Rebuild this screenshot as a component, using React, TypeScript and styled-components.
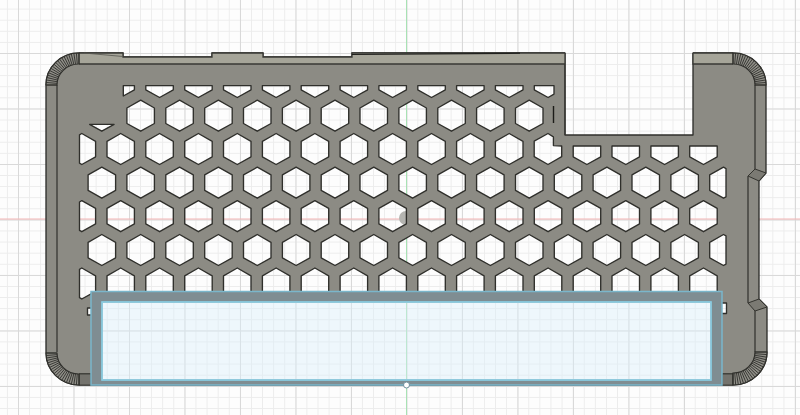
import { createGlobalStyle } from 'styled-components'
import styled from 'styled-components'

const GlobalStyle = createGlobalStyle`
  html, body {
    margin: 0;
    padding: 0;
    background: #fdfdfd;
    overflow: hidden;
  }
`

const Viewport = styled.main`
  width: 800px;
  height: 415px;
  background-color: #fdfdfd;
  background-image:
    linear-gradient(to right, #d9d9d9 1px, transparent 1px),
    linear-gradient(to bottom, #d9d9d9 1px, transparent 1px),
    linear-gradient(to right, #ececec 1px, transparent 1px),
    linear-gradient(to bottom, #ececec 1px, transparent 1px);
  background-size: 55.5px 55.5px, 55.5px 55.5px, 11.1px 11.1px, 11.1px 11.1px;
  background-position: 18px 53px, 18px 53px, 18px 53px, 18px 53px;
`

const Drawing = styled.svg`
  display: block;
  width: 800px;
  height: 415px;
`

type Pt = [number, number]
type Bounds = { minX?: number; maxX?: number; minY?: number; maxY?: number }

const HEX_W = 13.75
const HEX_H = 15.5
const PITCH = 38.85
const EVEN_X = 120.7
const ODD_X = 101.85

const hexagon = (cx: number, cy: number): Pt[] => [
  [cx, cy - HEX_H],
  [cx + HEX_W, cy - HEX_H / 2],
  [cx + HEX_W, cy + HEX_H / 2],
  [cx, cy + HEX_H],
  [cx - HEX_W, cy + HEX_H / 2],
  [cx - HEX_W, cy - HEX_H / 2],
]

// trim a polygon against one axis limit
const clipAxis = (pts: Pt[], axis: 0 | 1, limit: number, keepBelow: boolean): Pt[] => {
  const inside = (p: Pt) => (keepBelow ? p[axis] <= limit : p[axis] >= limit)
  const out: Pt[] = []
  pts.forEach((p, i) => {
    const q = pts[(i + 1) % pts.length]
    if (inside(p)) out.push(p)
    if (inside(p) !== inside(q)) {
      const t = (limit - p[axis]) / (q[axis] - p[axis])
      out.push([p[0] + (q[0] - p[0]) * t, p[1] + (q[1] - p[1]) * t])
    }
  })
  return out
}

const clip = (pts: Pt[], b: Bounds): Pt[] => {
  let r = pts
  if (b.minX !== undefined) r = clipAxis(r, 0, b.minX, false)
  if (b.maxX !== undefined) r = clipAxis(r, 0, b.maxX, true)
  if (b.minY !== undefined) r = clipAxis(r, 1, b.minY, false)
  if (b.maxY !== undefined) r = clipAxis(r, 1, b.maxY, true)
  return r
}

const toPath = (pts: Pt[]) =>
  'M' + pts.map(p => `${p[0].toFixed(1)},${p[1].toFixed(1)}`).join('L') + 'Z'

const row = (base: number, y: number, from: number, to: number, b: Bounds = {}) => {
  const list: Pt[][] = []
  for (let n = from; n <= to; n++) list.push(clip(hexagon(base + PITCH * n, y), b))
  return list
}

const notched: Pt[] = [
  [548, 133.5],
  [553.4, 136.8],
  [553.4, 145.6],
  [561.7, 146],
  [561.7, 156.7],
  [548, 164.5],
  [534.2, 156.7],
  [534.2, 141.2],
]

const holes: Pt[][] = [
  // top partial row
  ...row(EVEN_X, 82, 0, 0, { minX: 123.3, minY: 85.6 }),
  ...row(EVEN_X, 82, 1, 10, { minY: 85.6 }),
  ...row(EVEN_X, 82, 11, 11, { minY: 85.6, maxX: 554 }),
  ...row(ODD_X, 115.7, 1, 11),
  ...row(ODD_X, 115.7, 0, 0, { minY: 124.3 }),
  ...row(EVEN_X, 149, -1, -1, { minX: 79.5 }),
  ...row(EVEN_X, 149, 0, 10),
  notched,
  ...row(EVEN_X, 149, 12, 15, { minY: 146 }),
  ...row(ODD_X, 182.7, 0, 15),
  ...row(ODD_X, 182.7, 16, 16, { maxX: 726 }),
  ...row(EVEN_X, 216.2, -1, -1, { minX: 79.5 }),
  ...row(EVEN_X, 216.2, 0, 15),
  ...row(ODD_X, 250, 0, 15),
  ...row(ODD_X, 250, 16, 16, { maxX: 726 }),
  ...row(EVEN_X, 283.5, -1, -1, { minX: 79.5 }),
  ...row(EVEN_X, 283.5, 0, 15, { maxY: 292 }),
  [[87.5, 308], [92, 308], [92, 315], [87.5, 315]],
  [[720, 303], [726.5, 303], [726.5, 313.5], [720, 313.5]],
]

const OUTLINE =
  'M46,85 A33,32 0 0 1 79,53 L123,53 L123,57 L212,57 L212,53 L263,53 L263,57 L352,57 L352,53 ' +
  'L565,53 L565,135 L693,135 L693,53 L733,53 A33,32 0 0 1 766,85 L766,173 L759,181 L759,299 ' +
  'L767,307 L767,352 A34,33 0 0 1 733,385 L79,385 A33,33 0 0 1 46,352 Z'

const CUTOUT = 'M102,302 L711,302 L711,380 L102,380 Z'

// faceted corner, drawn as a ring of short spokes
const Fan = ({ cx, cy, start, rx = 33, ry = 32 }: { cx: number; cy: number; start: number; rx?: number; ry?: number }) => {
  const steps = 20
  const pos = (a: number, x: number, y: number): Pt => [cx + Math.cos(a) * x, cy + Math.sin(a) * y]
  const a0 = (start * Math.PI) / 180
  const a1 = a0 + Math.PI / 2
  const [ox0, oy0] = pos(a0, rx, ry)
  const [ox1, oy1] = pos(a1, rx, ry)
  const [ix0, iy0] = pos(a0, 22, 21)
  const [ix1, iy1] = pos(a1, 22, 21)
  const spokes = []
  for (let i = 0; i <= steps; i++) {
    const a = a0 + ((a1 - a0) * i) / steps
    const [x1, y1] = pos(a, 22, 21)
    const [x2, y2] = pos(a, rx, ry)
    spokes.push(<line key={i} x1={x1} y1={y1} x2={x2} y2={y2} stroke="#2f2f2b" strokeWidth="0.9" />)
  }
  return (
    <g>
      <path
        d={`M${ox0},${oy0} A${rx},${ry} 0 0 1 ${ox1},${oy1} L${ix1},${iy1} A22,21 0 0 0 ${ix0},${iy0} Z`}
        fill="#8f8e87"
        stroke="#2f2f2b"
        strokeWidth="1.2"
      />
      {spokes}
    </g>
  )
}

const Line = styled.path`
  fill: none;
  stroke: #383834;
  stroke-width: 1.3;
`

export default function App() {
  return (
    <Viewport>
      <GlobalStyle />
      <Drawing viewBox="0 0 800 415">
        <line x1="0" y1="219" x2="800" y2="219" stroke="#f3b4b4" strokeWidth="1" />
        <line x1="406.5" y1="0" x2="406.5" y2="415" stroke="#a8e2b4" strokeWidth="1" />
        <circle cx="406" cy="218" r="7" fill="#b4b4b0" />

        <path
          d={OUTLINE + CUTOUT + holes.map(toPath).join('')}
          fillRule="evenodd"
          fill="#8c8b84"
          stroke="#2f2f2b"
          strokeWidth="1.35"
          strokeLinejoin="round"
        />

        {/* lighter top lip */}
        <path d="M79,53 L123,53 L123,57 L212,57 L212,53 L263,53 L263,57 L352,57 L352,53 L565,53 L565,64 L79,64 Z" fill="#a6a599" />
        <path d="M693,53 L733,53 L733,64 L693,64 Z" fill="#a6a599" />
        <Line d="M79,64 L565,64 M565,53 L565,135 M693,53 L693,64 L733,64 M79,53 L123,53 L123,57 L212,57 L212,53 L263,53 L263,57 L352,57 L352,53 L565,53 M693,53 L733,53" />
        <path d="M84,53 L123,56.5" fill="none" stroke="#55554f" strokeWidth="0.8" />
        <path d="M352,54.5 L520,53.2" fill="none" stroke="#20201d" strokeWidth="1.2" />
        <path d="M553.5,106 L553.5,123" fill="none" stroke="#1b1b18" strokeWidth="1.4" />

        {/* side walls */}
        <Line d="M57,85 L57,352 M755,85 L755,169 M748,176 L748,303 M755,311 L755,352 M79,374 L91,374 M722,374 L733,374" />
        <path d="M748,176 L755,169 L766,173 L759,181 Z" fill="#7b7a73" stroke="#34342f" strokeWidth="1" />
        <path d="M748,303 L759,299 L767,307 L755,311 Z" fill="#7b7a73" stroke="#34342f" strokeWidth="1" />
        <path d="M79,374 L91,374 L91,385 L79,385 Z" fill="#74736d" stroke="#34342f" strokeWidth="0.8" />
        <path d="M722,374 L733,374 L733,385 L722,385 Z" fill="#74736d" stroke="#34342f" strokeWidth="0.8" />

        <Fan cx={79} cy={85} start={180} />
        <Fan cx={733} cy={85} start={270} />
        <Fan cx={733} cy={352} start={0} rx={34} ry={33} />
        <Fan cx={79} cy={353} start={90} ry={32} />

        {/* selected sketch profile */}
        <path
          d="M91,291.5 L722,291.5 L722,385 L91,385 Z M102,302 L102,380 L711,380 L711,302 Z"
          fill="#7f8d92"
          stroke="#7ab6cb"
          strokeWidth="1.5"
        />
        <rect x="102" y="302" width="609" height="78" fill="#d9effa" fillOpacity="0.42" stroke="#8ccbe0" strokeWidth="1.5" />
        <circle cx="406.5" cy="385" r="3" fill="#ffffff" stroke="#6f8f9c" strokeWidth="1" />
      </Drawing>
    </Viewport>
  )
}
